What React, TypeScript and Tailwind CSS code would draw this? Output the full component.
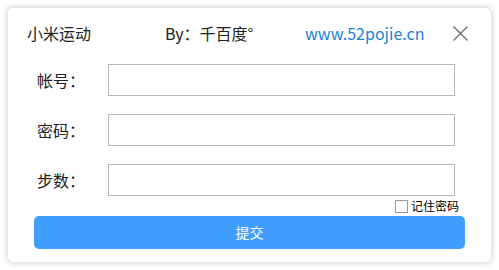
import React from "react";

export default function App() {
  const font = { fontFamily: '"Microsoft YaHei", "Noto Sans CJK SC", "Noto Sans", sans-serif' };
  return (
    <div className="w-[499px] h-[270px] bg-white p-[7px]" style={font}>
      <div className="w-[485px] h-[256px] bg-white rounded-[6px] border border-[#e4e4e4] shadow-[0_0_6px_rgba(0,0,0,0.18)] flex flex-col">
        <div className="flex items-center h-[48px] pl-[19px] pt-[2px] text-[16px] text-[#222]">
          <span className="w-[138px]">小米运动</span>
          <span className="w-[140px]">By：千百度°</span>
          <span className="text-[#1a82d6] w-[148px]">www.52pojie.cn</span>
          <svg width="15" height="15" viewBox="0 0 15 15" className="mt-[1px]">
            <path d="M0.5 0.5 L14.5 14.5 M14.5 0.5 L0.5 14.5" stroke="#6b6b6b" strokeWidth="1.3" />
          </svg>
        </div>
        <div className="flex flex-col gap-[18px] mt-[8px]">
          {["帐号：", "密码：", "步数："].map((l) => (
            <div key={l} className="flex items-center">
              <span className="w-[81px] text-right pr-[4px] text-[16px] text-[#222] leading-none">{l}</span>
              <div className="ml-[19px] w-[347px] h-[32px] border border-[#b7b7b7] bg-white" />
            </div>
          ))}
        </div>
        <div className="flex items-center justify-end pr-[32px] h-[20px] mt-[0px]">
          <div className="w-[13px] h-[13px] border border-[#9a9a9a] bg-white mr-[3px]" />
          <span className="text-[12px] text-black leading-none">记住密码</span>
        </div>
        <div className="ml-[26px] w-[431px] h-[33px] rounded-[5px] bg-[#409eff] flex items-center justify-center text-white text-[14px]">
          提交
        </div>
      </div>
    </div>
  );
}
